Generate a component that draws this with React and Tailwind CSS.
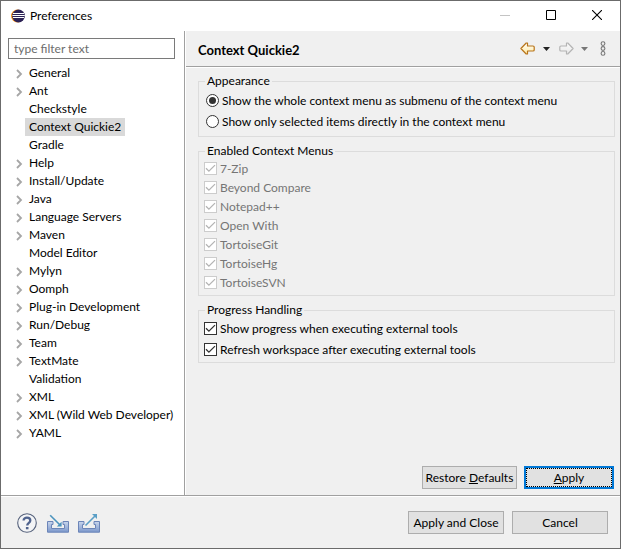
import React from "react";

const TREE = [
  { label: "General", expandable: true },
  { label: "Ant", expandable: true },
  { label: "Checkstyle" },
  { label: "Context Quickie2", selected: true },
  { label: "Gradle" },
  { label: "Help", expandable: true },
  { label: "Install/Update", expandable: true },
  { label: "Java", expandable: true },
  { label: "Language Servers", expandable: true },
  { label: "Maven", expandable: true },
  { label: "Model Editor" },
  { label: "Mylyn", expandable: true },
  { label: "Oomph", expandable: true },
  { label: "Plug-in Development", expandable: true },
  { label: "Run/Debug", expandable: true },
  { label: "Team", expandable: true },
  { label: "TextMate", expandable: true },
  { label: "Validation" },
  { label: "XML", expandable: true },
  { label: "XML (Wild Web Developer)", expandable: true },
  { label: "YAML", expandable: true },
];

const CONTEXT_MENUS = [
  "7-Zip",
  "Beyond Compare",
  "Notepad++",
  "Open With",
  "TortoiseGit",
  "TortoiseHg",
  "TortoiseSVN",
];

function EclipseLogo() {
  return (
    <svg width="14" height="14" viewBox="0 0 14 14" aria-hidden="true">
      <circle cx="6.4" cy="7" r="6.4" fill="#f7941e" />
      <circle cx="7.5" cy="7" r="6.4" fill="#2c2255" />
      <path d="M2 4.5h11M1.4 6.5h12.4M2 8.5h11" stroke="#fff" strokeWidth="1" />
    </svg>
  );
}

function Chevron() {
  return (
    <svg width="7" height="10" viewBox="0 0 7 10" fill="none" aria-hidden="true">
      <path d="M1 1L5 5L1 9" stroke="#a6a6a6" strokeWidth="1.8" />
    </svg>
  );
}

function Arrow({ stroke, top, bottom, id }) {
  return (
    <svg width="15" height="13" viewBox="0 0 15 13" aria-hidden="true">
      <defs>
        <linearGradient id={id} x1="0" y1="0" x2="0" y2="1">
          <stop offset="0" stopColor={top} />
          <stop offset="1" stopColor={bottom} />
        </linearGradient>
      </defs>
      <path
        d="M0.9 6.5L6.2 1H7.5V4H13Q14.2 4 14.2 5V8Q14.2 9 13 9H7.5V12H6.2Z"
        fill={`url(#${id})`}
        stroke={stroke}
        strokeWidth="1.2"
        strokeLinejoin="round"
      />
    </svg>
  );
}

function Caret({ color }) {
  return (
    <svg width="7" height="4" viewBox="0 0 7 4" aria-hidden="true">
      <path d="M0 0H7L3.5 4Z" fill={color} />
    </svg>
  );
}

function Check({ label, disabled = false }) {
  return (
    <label className={`flex items-center gap-[3px] ${disabled ? "h-[19px] text-[#757575]" : "h-[21px]"}`}>
      <span className="grid place-items-center">
        <input
          type="checkbox"
          defaultChecked
          disabled={disabled}
          className="peer col-start-1 row-start-1 size-[13px] appearance-none border border-[#333] bg-white disabled:border-[#ccc]"
        />
        <svg
          width="13"
          height="13"
          viewBox="0 0 13 13"
          fill="none"
          aria-hidden="true"
          className="pointer-events-none invisible col-start-1 row-start-1 peer-checked:visible"
        >
          <path d="M2 6.3L4.9 9.2L11 3.1" stroke={disabled ? "#b4b4b4" : "#333"} strokeWidth="1.3" />
        </svg>
      </span>
      <span>{label}</span>
    </label>
  );
}

function Radio({ label, checked = false }) {
  return (
    <label className="flex h-[21px] items-center gap-[3px]">
      <span className="grid place-items-center">
        <input
          type="radio"
          name="appearance"
          defaultChecked={checked}
          className="peer col-start-1 row-start-1 size-[13px] appearance-none rounded-full border border-[#333] bg-white"
        />
        <span className="pointer-events-none invisible col-start-1 row-start-1 size-[7px] rounded-full bg-[#333] peer-checked:visible" />
      </span>
      <span>{label}</span>
    </label>
  );
}

function Group({ title, className, children }) {
  return (
    <fieldset className="min-w-0 border border-[#dcdcdc]">
      <legend className="ml-[6px] px-[2px] leading-4">{title}</legend>
      <div className={className}>{children}</div>
    </fieldset>
  );
}

function PushButton({ children, className }) {
  return (
    <button type="button" className={`h-[23px] border border-[#adadad] bg-[#e1e1e1] text-center leading-4 whitespace-nowrap ${className}`}>
      {children}
    </button>
  );
}

function TitleBar() {
  return (
    <header className="flex h-[30px] shrink-0 items-center bg-white pl-[10px]">
      <EclipseLogo />
      <h1 className="ml-[5px] flex-1">Preferences</h1>
      <button type="button" aria-label="Minimize" disabled className="grid h-full w-[46px] place-items-center pr-px pb-[2px]">
        <svg width="10" height="10" viewBox="0 0 10 10" aria-hidden="true">
          <path d="M0 5.5H10" stroke="#c4c4c4" />
        </svg>
      </button>
      <button type="button" aria-label="Maximize" className="grid h-full w-[46px] place-items-center pr-px pb-[2px]">
        <svg width="10" height="10" viewBox="0 0 10 10" fill="none" aria-hidden="true">
          <path d="M0.5 0.5H9.5V9.5H0.5Z" stroke="#000" />
        </svg>
      </button>
      <button type="button" aria-label="Close" className="grid h-full w-[46px] place-items-center pr-px pb-[2px]">
        <svg width="10" height="10" viewBox="0 0 10 10" fill="none" aria-hidden="true">
          <path d="M0 0L10 10M10 0L0 10" stroke="#000" strokeWidth="1.1" />
        </svg>
      </button>
    </header>
  );
}

function Sidebar() {
  return (
    <nav className="flex w-[184px] shrink-0 flex-col border-r border-[#a0a0a0] bg-white pt-[7px] pl-[7px]">
      <input
        type="text"
        aria-label="Filter"
        placeholder="type filter text"
        className="mr-[9px] h-[21px] border border-[#7a7a7a] bg-white px-[5px] placeholder:text-[#6d6d6d]"
      />
      <ul className="mt-[5px]">
        {TREE.map((item) => (
          <li key={item.label} className="flex h-[18px] items-center pl-2">
            <span className="w-[9px] shrink-0 pt-[2px]">{item.expandable && <Chevron />}</span>
            <span className={`h-[18px] px-1 leading-[18px] whitespace-nowrap ${item.selected ? "bg-[#d9d9d9]" : ""}`}>
              {item.label}
            </span>
          </li>
        ))}
      </ul>
    </nav>
  );
}

function PageHeader() {
  return (
    <div className="flex h-[36px] shrink-0 items-center border-b border-[#a0a0a0] pr-[14px] pl-[12px]">
      <h2 className="flex-1 pt-[2px] text-[13px] font-bold">Context Quickie2</h2>
      <button type="button" aria-label="Back">
        <Arrow id="back" stroke="#b8741a" top="#fff" bottom="#ffe9a0" />
      </button>
      <button type="button" aria-label="Back history" className="ml-2">
        <Caret color="#222" />
      </button>
      <button type="button" aria-label="Forward" className="ml-[9px] -scale-x-100">
        <Arrow id="forward" stroke="#b4b4b4" top="#fbfbfb" bottom="#e8e8e8" />
      </button>
      <button type="button" aria-label="Forward history" className="ml-[7px]">
        <Caret color="#777" />
      </button>
      <button type="button" aria-label="View menu" className="ml-[12px]">
        <svg width="6" height="15" viewBox="0 0 6 15" fill="none" stroke="#777" strokeWidth="1.1" aria-hidden="true">
          <circle cx="3" cy="2.6" r="1.9" />
          <circle cx="3" cy="7.5" r="1.9" />
          <circle cx="3" cy="12.4" r="1.9" />
        </svg>
      </button>
    </div>
  );
}

function TrayIcon({ id, children }) {
  return (
    <svg width="22" height="20" viewBox="0 0 22 20" fill="none" aria-hidden="true">
      <defs>
        <linearGradient id={id} x1="0" y1="0" x2="0" y2="1">
          <stop offset="0" stopColor="#c9d6ec" />
          <stop offset="1" stopColor="#7b97cb" />
        </linearGradient>
      </defs>
      <path
        d="M0.5 8.5H6V11.5H4.5V15.5H17.5V11.5H16V8.5H21.5V19.2H0.5Z"
        fill={`url(#${id})`}
        stroke="#6c85b8"
      />
      {children}
    </svg>
  );
}

function Footer() {
  return (
    <footer className="flex shrink-0 items-center border-t border-[#a0a0a0] shadow-[inset_0_1px_0_#fff] pt-[15px] pr-[12px] pb-[14px] pl-4">
      <button type="button" aria-label="Help">
        <svg width="20" height="20" viewBox="0 0 20 20" fill="none" aria-hidden="true">
          <circle cx="10" cy="10" r="9.3" fill="#f3f4f6" stroke="#56627c" strokeWidth="1.1" />
          <path d="M6.6 7.6C6.6 3.6 13.3 3.7 13.3 7.5C13.3 9.9 10.2 9.8 10.2 12.6" stroke="#50638e" strokeWidth="2.3" />
          <path d="M8.9 14h2.6v2.3H8.9z" fill="#50638e" />
        </svg>
      </button>
      <button type="button" aria-label="Import preferences" className="ml-[10px]">
        <TrayIcon id="tray-in">
          <path d="M3.2 2.2L12.5 11.5" stroke="#4b93bd" strokeWidth="1.6" />
          <path d="M14.6 13.6V8.8L9.8 13.6Z" fill="#4b93bd" />
        </TrayIcon>
      </button>
      <button type="button" aria-label="Export preferences" className="ml-[9px]">
        <TrayIcon id="tray-out">
          <path d="M7.5 12.5L17 3" stroke="#5a9fc6" strokeWidth="1.6" />
          <path d="M19 1V6L14 1Z" fill="#5a9fc6" />
        </TrayIcon>
      </button>
      <div className="ml-auto flex gap-2">
        <PushButton className="w-[96px]">Apply and Close</PushButton>
        <PushButton className="w-[96px]">Cancel</PushButton>
      </div>
    </footer>
  );
}

export default function App() {
  return (
    <div className="flex min-h-screen w-full flex-col border border-[#6b6b6b] bg-[#f0f0f0] font-['Lato','Open_Sans',sans-serif] text-[12px] leading-4 text-black">
      <TitleBar />
      <div className="flex flex-1">
        <Sidebar />
        <main className="flex min-w-0 flex-1 flex-col border-l border-white">
          <PageHeader />
          <form className="flex flex-1 flex-col border-t border-white pt-[5px] pr-[5px] pb-[6px] pl-[12px]">
            <div className="flex flex-col gap-[6px]">
              <Group title="Appearance" className="pt-px pb-1 pl-[7px]">
                <Radio label="Show the whole context menu as submenu of the context menu" checked />
                <Radio label="Show only selected items directly in the context menu" />
              </Group>
              <Group title="Enabled Context Menus" className="pb-[3px] pl-[5px]">
                {CONTEXT_MENUS.map((name) => (
                  <Check key={name} label={name} disabled />
                ))}
              </Group>
              <Group title="Progress Handling" className="pb-[2px] pl-[5px]">
                <Check label="Show progress when executing external tools" />
                <Check label="Refresh workspace after executing external tools" />
              </Group>
            </div>
            <div className="mt-auto flex justify-end gap-[7px] pr-px">
              <PushButton className="w-[95px]">
                Restore <u>D</u>efaults
              </PushButton>
              <button
                type="button"
                className="h-[23px] w-[90px] border-2 border-[#0078d7] bg-[#e1e1e1]"
              >
                <span className="flex h-full items-center justify-center border border-dotted border-black leading-4">
                  <span>
                    <u>A</u>pply
                  </span>
                </span>
              </button>
            </div>
          </form>
        </main>
      </div>
      <Footer />
    </div>
  );
}
